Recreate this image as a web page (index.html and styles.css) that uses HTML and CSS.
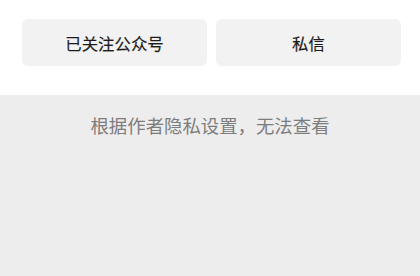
FILE: index.html
```html
<!DOCTYPE html>
<html lang="zh-CN">
<head>
    <meta charset="UTF-8">
    <meta name="viewport" content="width=device-width, initial-scale=1.0">
    <title>公众号主页</title>
    <link rel="stylesheet" href="styles.css">
</head>
<body>
    <div class="actions">
        <button class="btn">已关注公众号</button>
        <button class="btn">私信</button>
    </div>
    <div class="content">
        <p class="notice">根据作者隐私设置，无法查看</p>
    </div>
</body>
</html>
```
FILE: styles.css
```css
html, body {
    margin: 0;
    height: 100%;
}
body {
    display: flex;
    flex-direction: column;
    background-color: #fff;
    font-family: "Noto Sans CJK SC", "Noto Sans", sans-serif;
}
.actions {
    display: flex;
    gap: 9px;
    padding: 19px 19px 29px 22px;
}
.btn {
    flex: 1;
    height: 47px;
    border: none;
    border-radius: 6px;
    background-color: #f2f2f2;
    color: #1c1c1c;
    font-family: inherit;
    font-size: 16.4px;
    font-weight: 400;
    -webkit-text-stroke: 0.18px #1c1c1c;
    padding: 0;
}
.content {
    flex: 1;
    background-color: #ededed;
}
.notice {
    margin: 0;
    padding-top: 17px;
    text-align: center;
    font-size: 18.4px;
    line-height: 26px;
    color: #7d7d7d;
}
```
